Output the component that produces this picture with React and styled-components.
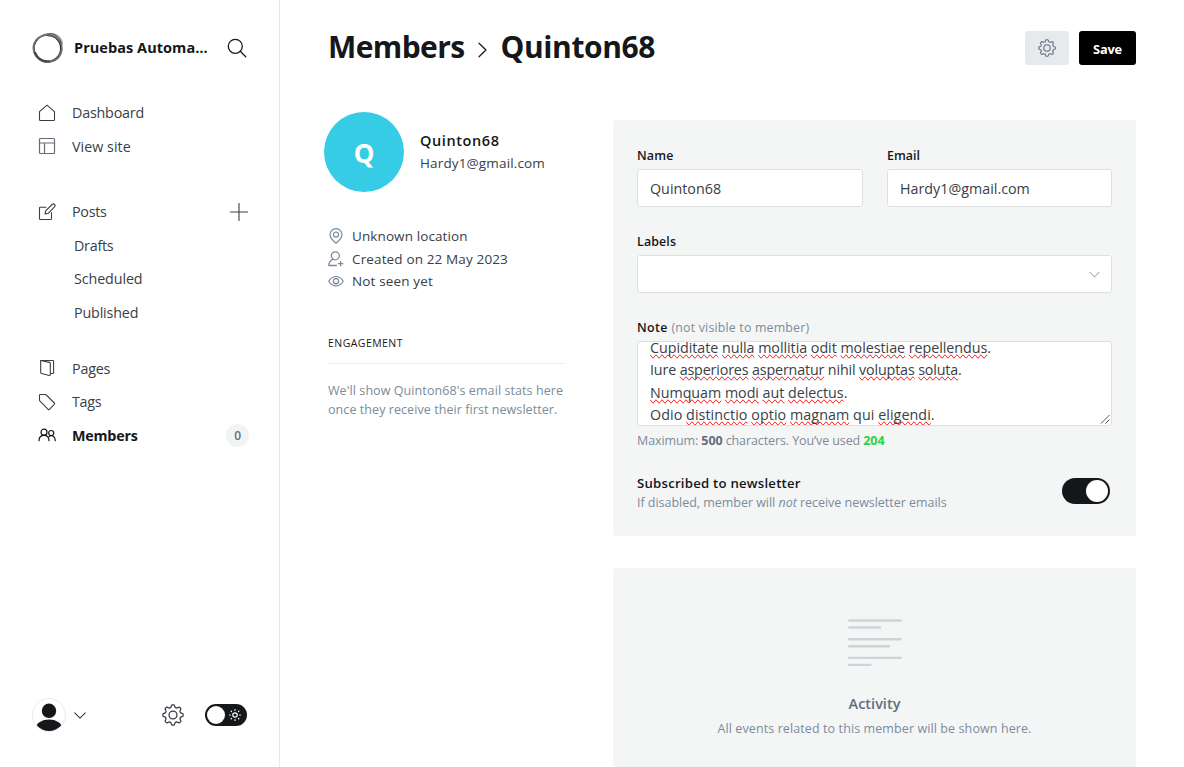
import React from "react";
import styled, { createGlobalStyle, css } from "styled-components";

const Global = createGlobalStyle`
  * { box-sizing: border-box; }
  html, body { margin: 0; background: #fff; overflow: hidden; }
  body { font-family: "Open Sans", "Noto Sans", sans-serif; color: #15171a; }
  p, h1, h2, h3 { margin: 0; }
`;

const spacing = css`letter-spacing: ${(p) => p.$ls || 0}px;`;

const Page = styled.div`
  display: flex;
  height: 767px;
  overflow: hidden;
`;

/* ---------- sidebar ---------- */
const Sidebar = styled.nav`
  display: flex;
  flex-direction: column;
  flex: 0 0 280px;
  border-right: 1px solid #e5e7e9;
`;
const SiteHeader = styled.header`
  display: flex;
  align-items: center;
  height: 96px;
  padding: 0 32px;
`;
const SiteName = styled.div`
  flex: 1;
  margin-left: 10px;
  font-size: 14.5px;
  font-weight: 700;
  line-height: 20px;
  white-space: nowrap;
  ${spacing}
`;
const Group = styled.ul`
  list-style: none;
  margin: 0 0 ${(p) => p.$gap || 0}px;
  padding: 0 31px 0 38px;
`;
const Item = styled.li`
  display: flex;
  align-items: center;
  height: 33.5px;
  font-size: 14.3px;
  font-weight: ${(p) => (p.$active ? 700 : 400)};
  color: ${(p) => (p.$active ? "#15171a" : "#394047")};
  padding-left: ${(p) => (p.$sub ? 36 : 0)}px;
  ${spacing}
  svg:first-child { margin-right: 16px; }
`;
const Label = styled.span`flex: 1; white-space: nowrap;`;
const Count = styled.span`
  width: 23px;
  height: 23px;
  margin-right: -1px;
  border-radius: 50%;
  background: #f1f3f4;
  color: #626d79;
  font-size: 12px;
  font-weight: 600;
  line-height: 24px;
  text-align: center;
`;
const SidebarFooter = styled.footer`
  display: flex;
  align-items: center;
  margin-top: auto;
  padding: 0 32px 35px;
`;
const UserAvatar = styled.div`
  width: 34px;
  height: 34px;
  border: 1px solid #e8eaec;
  border-radius: 50%;
  overflow: hidden;
  margin-right: 8px;
  svg { display: block; }
`;
const ThemeSwitch = styled.div`
  display: flex;
  align-items: center;
  justify-content: space-between;
  width: 42px;
  height: 22px;
  margin-left: 21px;
  padding: 0 6px 0 2px;
  border-radius: 11px;
  background: #15171a;
`;
const Knob = styled.span`
  width: ${(p) => p.$size}px;
  height: ${(p) => p.$size}px;
  border-radius: 50%;
  background: #fff;
`;
const Spacer = styled.span`flex: 1;`;

/* ---------- main ---------- */
const Main = styled.main`
  flex: 1;
  padding: 0 48px;
`;
const TitleBar = styled.header`
  display: flex;
  align-items: center;
  height: 96px;
`;
const Title = styled.h1`
  flex: 1;
  display: flex;
  align-items: center;
  padding-bottom: 2px;
  font-size: 30px;
  font-weight: 700;
  line-height: 40px;
`;
const Crumb = styled.span`${spacing}`;
const ArrowSlot = styled.span`
  display: flex;
  padding: 6px 14px 0 13px;
`;
const Button = styled.button`
  display: flex;
  align-items: center;
  justify-content: center;
  width: ${(p) => p.$w}px;
  height: 34px;
  margin-left: ${(p) => (p.$primary ? 10 : 0)}px;
  padding: ${(p) => (p.$primary ? "2px 0 0" : "0")};
  border: 0;
  border-radius: 3px;
  background: ${(p) => (p.$primary ? "#000" : "#e6eaed")};
  color: #fff;
  font: 700 12.8px "Open Sans", sans-serif;
  letter-spacing: -0.2px;
`;
const Columns = styled.div`
  display: grid;
  grid-template-columns: 237px 523px;
  column-gap: 48px;
`;
const Profile = styled.div`
  display: flex;
  align-items: center;
  margin: 16px 0 33px -4px;
`;
const ProfileText = styled.div`padding-bottom: 2px;`;
const Avatar = styled.div`
  width: 80px;
  height: 80px;
  margin-right: 16px;
  border-radius: 50%;
  background: #37cce5;
  color: #fff;
  font-size: 26px;
  font-weight: 700;
  line-height: 83px;
  text-align: center;
`;
const ProfileName = styled.h3`
  font-size: 14.5px;
  font-weight: 560;
  line-height: 23px;
  ${spacing}
`;
const ProfileEmail = styled.p`
  font-size: 13.5px;
  line-height: 22px;
  color: #394047;
  ${spacing}
`;
const Meta = styled.p`
  display: flex;
  align-items: center;
  gap: 8px;
  height: 22.6px;
  font-size: 13.5px;
  color: #394047;
  white-space: nowrap;
  ${spacing}
`;
const SectionTitle = styled.h4`
  margin: 42px 0 0;
  padding-bottom: 12px;
  border-bottom: 1px solid #ebeeef;
  font-size: 10.5px;
  font-weight: 500;
  line-height: 16px;
  ${spacing}
`;
const EmptyStats = styled.p`
  margin-top: 17px;
  font-size: 12.5px;
  line-height: 19px;
  color: #7c8b9a;
  white-space: nowrap;
`;
const Line = styled.span`display: block; ${spacing}`;

const Card = styled.section`
  height: ${(p) => p.$h}px;
  margin-top: ${(p) => p.$mt}px;
  padding: 24px;
  border-radius: 3px;
  background: #f4f6f6;
`;
const FieldRow = styled.div`
  display: grid;
  grid-template-columns: ${(p) => (p.$two ? "226px 225px" : "475px")};
  column-gap: 24px;
  margin-bottom: 23px;
`;
const FieldLabel = styled.div`
  height: 25px;
  padding-top: 2px;
  font-size: 12.4px;
  font-weight: 560;
  line-height: 20px;
  white-space: nowrap;
  ${spacing}
`;
const Hint = styled.span`
  font-weight: 400;
  color: #7c8b9a;
  ${spacing}
`;
const Input = styled.div`
  display: flex;
  align-items: center;
  height: 38px;
  padding: 0 12px;
  border: 1px solid #dddfe1;
  border-radius: 3px;
  background: #fff;
  color: #394047;
  font-size: 14.3px;
  ${spacing}
  svg { margin: 1px -1px 0 auto; }
`;
const NoteArea = styled.div`
  position: relative;
  height: 85px;
  padding: 0 12px;
  border: 1px solid #dddfe1;
  border-radius: 3px;
  background: #fff;
  color: #394047;
  font-size: 14.3px;
  line-height: 22.3px;
  overflow: hidden;
  white-space: nowrap;
`;
const NoteText = styled.div`margin-top: -5px;`;
const Misspelled = styled.span`
  text-decoration-line: spelling-error;
`;
const Grip = styled.svg`
  position: absolute;
  right: 1px;
  bottom: 1px;
`;
const Help = styled.p`
  padding-top: ${(p) => p.$top || 0}px;
  font-size: 12.5px;
  line-height: 20px;
  color: #7c8b9a;
  white-space: nowrap;
  ${spacing}
  b { color: #626d79; }
`;
const Used = styled.strong`color: #30cf43;`;
const Newsletter = styled.div`
  display: flex;
  align-items: center;
  justify-content: space-between;
  margin-top: 22px;
  padding-right: 2px;
`;
const NewsletterTitle = styled.h4`
  margin: 0;
  font-size: 13.2px;
  font-weight: 560;
  line-height: 20px;
  ${spacing}
`;
const Toggle = styled.div`
  display: flex;
  align-items: center;
  justify-content: flex-end;
  width: 48px;
  height: 26px;
  margin-bottom: 5px;
  padding: 2px;
  border-radius: 13px;
  background: #15171a;
`;
const Empty = styled.div`
  display: flex;
  flex-direction: column;
  align-items: center;
  padding-top: 27px;
`;
const EmptyTitle = styled.h4`
  margin: 26px 0 4px;
  font-size: 14.5px;
  font-weight: 600;
  line-height: 22px;
  color: #626d79;
  ${spacing}
`;

/* ---------- icons ---------- */
const Svg = ({ w = 18, h = w, vb = `0 0 ${w} ${h}`, c = "#394047", sw = 1.1, children }) => (
  <svg width={w} height={h} viewBox={vb} fill="none" stroke={c} strokeWidth={sw}
    strokeLinecap="round" strokeLinejoin="round">{children}</svg>
);
const Logo = () => (
  <Svg w={32} c="#2a2a2a" sw={1.5}>
    <path d="M16.500 2.500c5.500-1.500 12.800 3 13.300 9.500" stroke="#b5b5b5" strokeWidth="2.800" />
    <path d="M29.500 17c-.5 5-4 9.500-8 11.300" stroke="#aaa" strokeWidth="2.500" />
    <circle cx="15.300" cy="16.500" r="13.500" />
    <ellipse cx="16.300" cy="15.700" rx="14.500" ry="13.200" transform="rotate(-48 16 16)" stroke="#666" strokeWidth="1.100" />
    <ellipse cx="15.700" cy="16.600" rx="14.500" ry="13.600" transform="rotate(15 16 16)" stroke="#777" strokeWidth="1.200" />
    <path d="M15.500 3.600c6 0 10.500 3 13.200 7.400" stroke="#555" strokeWidth="1.200" />
    <path d="M3 20.500c2.500 6 8 9.300 14 8.800" stroke="#444" strokeWidth="2" />
  </Svg>
);
const Search = () => (
  <Svg w={20} c="#15171a" sw={1.3}><circle cx="8.300" cy="8.300" r="7" /><path d="M13.300 13.300 18.700 18.700" /></Svg>
);
const Home = () => (
  <Svg><path d="M1.500 7.600 9 1.200l7.500 6.400v8.100a.8.8 0 0 1-.8.8H2.300a.8.8 0 0 1-.8-.8z" /></Svg>
);
const Layout = () => (
  <Svg c="#626d79" sw={1.2}><rect x="1.500" y="1.500" width="15" height="15" rx="1" /><path d="M1.500 6h15M6.500 6v10.500" /></Svg>
);
const Edit = () => (
  <Svg>
    <path d="M8 4.200H2.300a.8.800 0 0 0-.8.800v10.700c0 .45.350.8.800.8h10.400a.8.800 0 0 0 .8-.8V9.500" />
    <path d="m7 11 .7-3.200 6.400-6.300a1.650 1.650 0 0 1 2.400 2.400L10.200 10.300z" />
  </Svg>
);
const Plus = () => <Svg w={18} c="#394047" sw={1.1}><path d="M9 .5v17M.5 9h17" /></Svg>;
const Pages = () => (
  <Svg>
    <path d="M2.800 1.500h12a.8.800 0 0 1 .8.800v11.400a.8.800 0 0 1-.8.800h-2.300" />
    <path d="m2.700 1.500 8.700 1.900c.5.1.9.5.9 1v11.200c0 .7-.5 1-1.100.9l-7.600-2a1 1 0 0 1-.9-1V2.500c0-.6 0-.9 0-1" />
  </Svg>
);
const Tag = () => (
  <Svg><path d="M1.500 2.300c0-.5.300-.8.800-.8h4.900c.4 0 .8.200 1.100.5l8 8c.4.400.4.900 0 1.300l-4.900 5c-.4.400-.9.400-1.300 0L2 8.200a1.500 1.500 0 0 1-.5-1z" /></Svg>
);
const Members = () => (
  <Svg c="#15171a" sw={1.2}>
    <circle cx="6" cy="6.200" r="3" /><circle cx="13.200" cy="7" r="2.500" />
    <path d="M1 14.700c0-3.200 2-5.300 5-5.300s5 2.100 5 5.300M11.200 10.400c3-1.900 6.100.2 6.100 4.300" />
  </Svg>
);
const gearPath = (n, ro, ri, c) => {
  const steps = 96;
  const pts = [];
  for (let i = 0; i < steps; i++) {
    const a = (i / steps) * Math.PI * 2 - Math.PI / 2;
    const wave = Math.tanh(2 * Math.cos((a + Math.PI / 2) * n)) / Math.tanh(2);
    const r = (ro + ri) / 2 + ((ro - ri) / 2) * wave;
    pts.push(`${(c + r * Math.cos(a)).toFixed(2)} ${(c + r * Math.sin(a)).toFixed(2)}`);
  }
  return `M${pts.join("L")}Z`;
};
const Gear = ({ size = 20, c, sw = 1.2 }) => (
  <Svg w={size} vb="0 0 20 20" c={c} sw={sw}>
    <path d={gearPath(8, 9.200, 7.100, 10)} /><circle cx="10" cy="10" r="3.600" />
  </Svg>
);
const Chevron = ({ w = 12, h = 7, c = "#394047" }) => (
  <Svg w={w} h={h} vb="0 0 12 7" c={c}><path d="m.8.8 5.200 5.300L11.200.8" /></Svg>
);
const CrumbArrow = () => (
  <Svg w={9} h={16} c="#15171a" sw={1.2}><path d="m1 1.200 7 6.800-7 6.800" /></Svg>
);
const Sun = () => (
  <Svg w={12} c="#fff" sw={1.200}>
    <circle cx="6" cy="6" r="2.200" />
    <path d="M6 .6v.7M6 10.700v.7M.6 6h.7M10.700 6h.7M2.100 2.100l.4.4M9.500 9.500l.4.4M2.100 9.900l.4-.4M9.500 2.500l.4-.4" />
  </Svg>
);
const Person = () => (
  <svg width="32" height="32" viewBox="0 0 32 32" fill="#15171a">
    <circle cx="16" cy="11.800" r="7.200" /><ellipse cx="16" cy="29" rx="13" ry="8.500" />
  </svg>
);
const Pin = () => (
  <Svg w={16} c="#7c8b9a" sw={1.2}><path d="M8 15.300C4.500 12.500 2 9.700 2 6.600a6 6 0 0 1 12 0c0 3.100-2.500 5.900-6 8.700z" /><circle cx="8" cy="6.600" r="2.600" /></Svg>
);
const UserPlus = () => (
  <Svg w={16} c="#7c8b9a" sw={1.3}><circle cx="7.300" cy="4.800" r="4" /><path d="M4.800 8.300C2.200 9.500.8 11.500.8 14.500h7.600M12.600 10.500v4.400M10.400 12.700h4.400" /></Svg>
);
const Eye = () => (
  <Svg w={16} c="#7c8b9a" sw={1.2}><path d="M.7 8.200C4.700 1.900 11.300 1.900 15.300 8.200c-4 6.300-10.600 6.300-14.600 0z" /><circle cx="8" cy="8.200" r="2.600" /></Svg>
);
const ActivityLines = () => (
  <Svg w={54} h={48} c="#ced4d9" sw={2.400}>
    <path d="M1.200 1.500h51.600M1.200 8.500h30.800M1.200 20.200h51.600M1.200 27.200h39.800M1.200 38.900h51.600M1.200 45.900h21.300" />
  </Svg>
);

const noteLines = [
  { ls: -0.04, words: ["*Cupiditate", "*nulla", "*mollitia", "*odit", "*molestiae", "*repellendus."] },
  { ls: -0.15, words: ["Iure", "*asperiores", "*aspernatur", "nihil", "*voluptas", "*soluta."] },
  { ls: -0.04, words: ["*Numquam", "*modi", "*aut", "*delectus."] },
  { ls: 0.06, words: ["Odio", "*distinctio", "*optio", "*magnam", "qui", "*eligendi."] },
];
const NoteWord = ({ word }) => {
  if (word[0] !== "*") return word;
  const dot = word.endsWith(".");
  return <><Misspelled>{word.slice(1, dot ? -1 : undefined)}</Misspelled>{dot && "."}</>;
};

export default function App() {
  return (
    <Page>
      <Global />
      <Sidebar>
        <SiteHeader>
          <Logo />
          <SiteName $ls={0.05}>Pruebas Automa…</SiteName>
          <Search />
        </SiteHeader>
        <Group $gap={32}>
          <Item $ls={-0.2}><Home /><Label>Dashboard</Label></Item>
          <Item $ls={0.03}><Layout /><Label>View site</Label></Item>
        </Group>
        <Group $gap={22.5}>
          <Item $ls={-0.25}><Edit /><Label>Posts</Label><Plus /></Item>
          <Item $sub $ls={-0.25}>Drafts</Item>
          <Item $sub $ls={-0.1}>Scheduled</Item>
          <Item $sub $ls={-0.15}>Published</Item>
        </Group>
        <Group>
          <Item $ls={-0.2}><Pages /><Label>Pages</Label></Item>
          <Item $ls={-0.3}><Tag /><Label>Tags</Label></Item>
          <Item $active $ls={-0.2}><Members /><Label>Members</Label><Count>0</Count></Item>
        </Group>
        <SidebarFooter>
          <UserAvatar><Person /></UserAvatar>
          <Chevron />
          <Spacer />
          <Gear size={22} />
          <ThemeSwitch><Knob $size={18} /><Sun /></ThemeSwitch>
        </SidebarFooter>
      </Sidebar>

      <Main>
        <TitleBar>
          <Title>
            <Crumb $ls={-0.6}>Members</Crumb>
            <ArrowSlot><CrumbArrow /></ArrowSlot>
            <Crumb $ls={-0.4}>Quinton68</Crumb>
          </Title>
          <Button $w={44}><Gear size={18} c="#626d79" /></Button>
          <Button $w={57} $primary>Save</Button>
        </TitleBar>
        <Columns>
          <div>
            <Profile>
              <Avatar>Q</Avatar>
              <ProfileText>
                <ProfileName $ls={0.6}>Quinton68</ProfileName>
                <ProfileEmail $ls={0.15}>Hardy1@gmail.com</ProfileEmail>
              </ProfileText>
            </Profile>
            <Meta $ls={0.1}><Pin />Unknown location</Meta>
            <Meta $ls={0.14}><UserPlus />Created on 22 May 2023</Meta>
            <Meta $ls={0.15}><Eye />Not seen yet</Meta>
            <SectionTitle $ls={0.45}>ENGAGEMENT</SectionTitle>
            <EmptyStats>
              <Line $ls={0.08}>We'll show Quinton68's email stats here</Line>
              <Line $ls={0.07}>once they receive their first newsletter.</Line>
            </EmptyStats>
          </div>
          <div>
            <Card $h={416} $mt={24}>
              <FieldRow $two>
                <div>
                  <FieldLabel $ls={0.15}>Name</FieldLabel>
                  <Input>Quinton68</Input>
                </div>
                <div>
                  <FieldLabel $ls={0.05}>Email</FieldLabel>
                  <Input>Hardy1@gmail.com</Input>
                </div>
              </FieldRow>
              <FieldRow>
                <div>
                  <FieldLabel $ls={0.15}>Labels</FieldLabel>
                  <Input><Chevron w={11} h={7} c="#abb4be" /></Input>
                </div>
              </FieldRow>
              <FieldLabel $ls={0.4}>Note <Hint $ls={0.17}>(not visible to member)</Hint></FieldLabel>
              <NoteArea>
                <NoteText>
                  {noteLines.map((line, i) => (
                    <Line key={i} $ls={line.ls}>
                      {line.words.map((w, j) => (
                        <React.Fragment key={j}>{j > 0 && " "}<NoteWord word={w} /></React.Fragment>
                      ))}
                    </Line>
                  ))}
                </NoteText>
                <Grip width="10" height="10" stroke="#555" strokeWidth="1"><path d="M1 9.500 9.500 1M5.500 9.500l4-4" /></Grip>
              </NoteArea>
              <Help $top={5} $ls={-0.1}>Maximum: <b>500</b> characters. You’ve used <Used>204</Used></Help>
              <Newsletter>
                <div>
                  <NewsletterTitle $ls={0.22}>Subscribed to newsletter</NewsletterTitle>
                  <Help $ls={-0.03}>If disabled, member will <em>not</em> receive newsletter emails</Help>
                </div>
                <Toggle><Knob $size={22} /></Toggle>
              </Newsletter>
            </Card>
            <Card $h={240} $mt={32}>
              <Empty>
                <ActivityLines />
                <EmptyTitle>Activity</EmptyTitle>
                <Help $ls={0.1}>All events related to this member will be shown here.</Help>
              </Empty>
            </Card>
          </div>
        </Columns>
      </Main>
    </Page>
  );
}
